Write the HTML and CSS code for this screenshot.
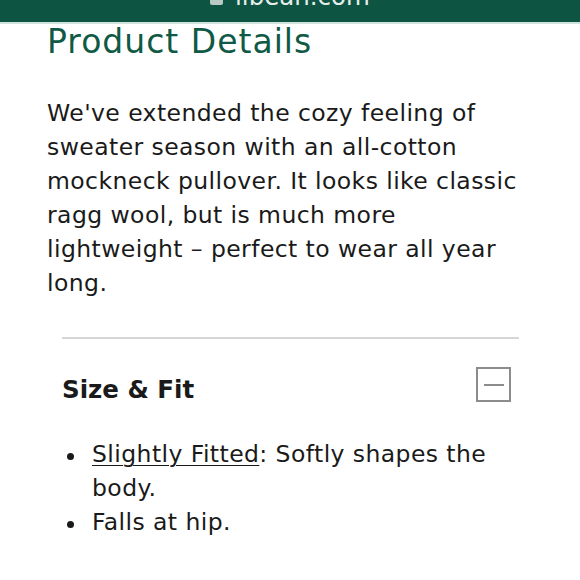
FILE: index.html
```html
<!DOCTYPE html>
<html lang="en">
<head>
<meta charset="utf-8">
<link rel="stylesheet" href="styles.css">
</head>
<body>
<header class="urlbar">
  <div class="url">
    <span class="lock"></span>
    <span class="domain">llbean.com</span>
  </div>
</header>
<main class="content">
  <h1 class="title">Product Details</h1>
  <p class="desc">We've extended the cozy feeling of sweater season with an all-cotton mockneck pullover. It looks like classic ragg wool, but is much more lightweight – perfect to wear all year long.</p>
  <section class="accordion">
    <div class="acc-head">
      <h2 class="acc-title">Size &amp; Fit</h2>
      <span class="toggle"><span class="minus"></span></span>
    </div>
    <ul class="acc-list">
      <li><span class="bullet"></span><span><a class="fit-link">Slightly Fitted</a>: Softly shapes the body.</span></li>
      <li><span class="bullet"></span><span>Falls at hip.</span></li>
    </ul>
  </section>
</main>
</body>
</html>
```
FILE: styles.css
```css
html, body {
  margin: 0;
  padding: 0;
  background: #fff;
}
body {
  font-family: "DejaVu Sans", sans-serif;
  color: #1a1a1a;
}
.urlbar {
  height: 22px;
  background: #0d5443;
  border-bottom: 2px solid #cfe3dc;
  overflow: hidden;
}
.url {
  display: flex;
  align-items: flex-end;
  justify-content: center;
  gap: 12px;
  height: 6px;
  overflow: hidden;
}
.lock {
  width: 13px;
  height: 12px;
  background: #b9c9c3;
  border-radius: 2px;
  flex: none;
  margin-bottom: 1px;
}
.domain {
  color: #e6eeeb;
  font-size: 24.5px;
  line-height: 26px;
  margin-bottom: -4px;
}
.content {
  padding: 0 46px 0 47px;
}
.title {
  margin: 0;
  font-weight: 400;
  font-size: 33px;
  line-height: 36px;
  letter-spacing: 1px;
  color: #0f5945;
}
.desc {
  margin: 36px 0 0;
  font-size: 23.5px;
  line-height: 34px;
  letter-spacing: 0.42px;
}
.accordion {
  margin: 37px 15px 0;
  border-top: 2px solid #d6d6d6;
}
.acc-head {
  display: flex;
  align-items: flex-start;
  justify-content: space-between;
  padding: 28px 8px 0 0;
}
.acc-title {
  margin: 5px 0 0;
  font-size: 24.5px;
  font-weight: 700;
  line-height: 36px;
}
.toggle {
  width: 31px;
  height: 31px;
  border: 2px solid #8c8c8c;
  display: flex;
  align-items: center;
  justify-content: center;
}
.minus {
  width: 20px;
  height: 2px;
  background: #8c8c8c;
}
.acc-list {
  list-style: none;
  margin: 29px 0 0;
  padding: 0;
  font-size: 23.5px;
  line-height: 34px;
  letter-spacing: 0.42px;
}
.acc-list li {
  display: grid;
  grid-template-columns: 30px 1fr;
}
.bullet {
  width: 7px;
  height: 7px;
  border-radius: 50%;
  background: #1a1a1a;
  margin: 16px 0 0 5px;
}
.fit-link {
  text-decoration: underline;
  text-underline-offset: 3px;
  text-decoration-thickness: 1px;
  color: #1a1a1a;
}
```
